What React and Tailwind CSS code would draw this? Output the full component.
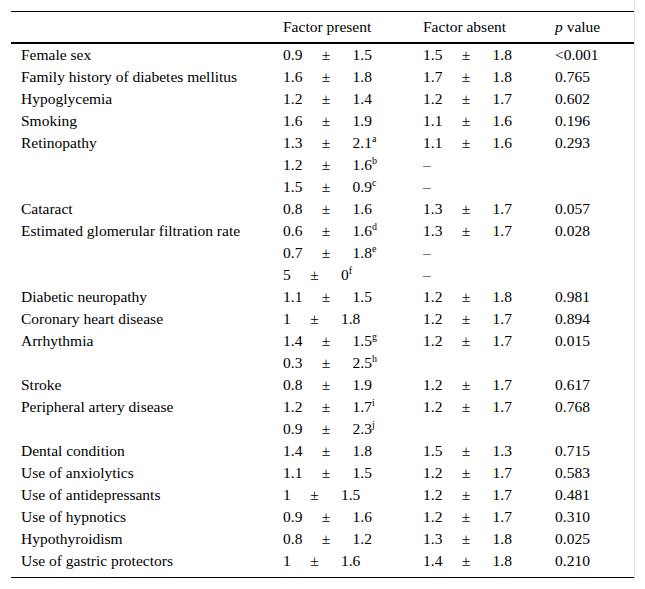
import React from "react";

const rows = [
  ["Female sex", ["0.9", "1.5"], ["1.5", "1.8"], "<0.001"],
  ["Family history of diabetes mellitus", ["1.6", "1.8"], ["1.7", "1.8"], "0.765"],
  ["Hypoglycemia", ["1.2", "1.4"], ["1.2", "1.7"], "0.602"],
  ["Smoking", ["1.6", "1.9"], ["1.1", "1.6"], "0.196"],
  ["Retinopathy", ["1.3", "2.1", "a"], ["1.1", "1.6"], "0.293"],
  ["", ["1.2", "1.6", "b"], "dash", ""],
  ["", ["1.5", "0.9", "c"], "dash", ""],
  ["Cataract", ["0.8", "1.6"], ["1.3", "1.7"], "0.057"],
  ["Estimated glomerular filtration rate", ["0.6", "1.6", "d"], ["1.3", "1.7"], "0.028"],
  ["", ["0.7", "1.8", "e"], "dash", ""],
  ["", ["5", "0", "f"], "dash", ""],
  ["Diabetic neuropathy", ["1.1", "1.5"], ["1.2", "1.8"], "0.981"],
  ["Coronary heart disease", ["1", "1.8"], ["1.2", "1.7"], "0.894"],
  ["Arrhythmia", ["1.4", "1.5", "g"], ["1.2", "1.7"], "0.015"],
  ["", ["0.3", "2.5", "h"], null, ""],
  ["Stroke", ["0.8", "1.9"], ["1.2", "1.7"], "0.617"],
  ["Peripheral artery disease", ["1.2", "1.7", "i"], ["1.2", "1.7"], "0.768"],
  ["", ["0.9", "2.3", "j"], null, ""],
  ["Dental condition", ["1.4", "1.8"], ["1.5", "1.3"], "0.715"],
  ["Use of anxiolytics", ["1.1", "1.5"], ["1.2", "1.7"], "0.583"],
  ["Use of antidepressants", ["1", "1.5"], ["1.2", "1.7"], "0.481"],
  ["Use of hypnotics", ["0.9", "1.6"], ["1.2", "1.7"], "0.310"],
  ["Hypothyroidism", ["0.8", "1.2"], ["1.3", "1.8"], "0.025"],
  ["Use of gastric protectors", ["1", "1.6"], ["1.4", "1.8"], "0.210"],
];

function Val({ v }) {
  if (v === "dash") return <span>–</span>;
  if (!v) return null;
  return (
    <span className="whitespace-nowrap">
      <span>{v[0]}</span>
      <span className="ml-[19.4px] mr-[22.3px]">±</span>
      <span>{v[1]}</span>
      {v[2] && (
        <span className="relative top-[-6px] text-[10px] leading-none">{v[2]}</span>
      )}
    </span>
  );
}

export default function App() {
  return (
    <div className="w-[635px] border-r border-[#e3e3e3] pl-[11px] pt-[11px] bg-white text-[15.5px] text-black font-['Liberation_Serif','Times_New_Roman',serif]">
      <div className="border-t border-black pb-[5px] border-b">
        <div className="flex h-[32px] items-center border-b-2 border-black">
          <div className="w-[262px] pl-[10px]"></div>
          <div className="w-[140px] pl-[10px]">Factor present</div>
          <div className="w-[132px] pl-[10px]">Factor absent</div>
          <div className="pl-[10px]">
            <i>p</i> value
          </div>
        </div>
        {rows.map((r, i) => (
          <div key={i} className="flex h-[22px] items-center leading-none">
            <div className="w-[262px] pl-[10px]">{r[0]}</div>
            <div className="w-[140px] pl-[10px]">
              <Val v={r[1]} />
            </div>
            <div className="w-[132px] pl-[10px]">
              <Val v={r[2]} />
            </div>
            <div className="pl-[10px]">{r[3]}</div>
          </div>
        ))}
      </div>
      <div className="h-[1px]"></div>
    </div>
  );
}
